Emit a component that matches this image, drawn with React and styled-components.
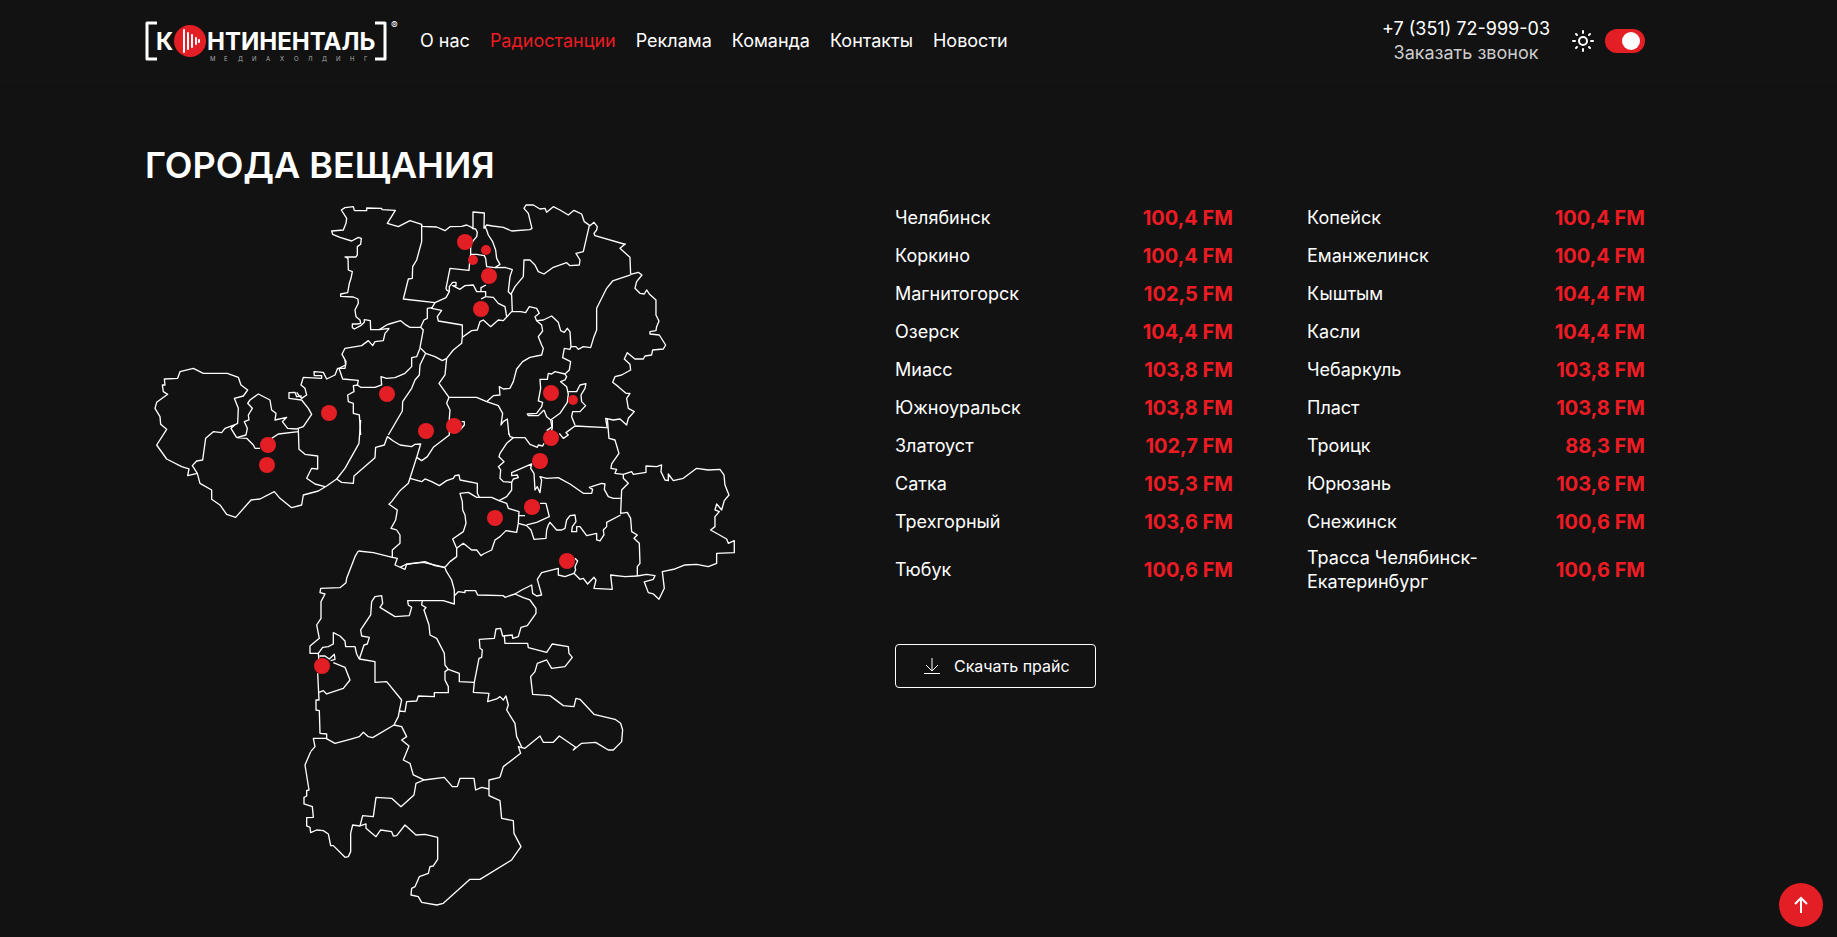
import React, { useState } from 'react';
import styled, { createGlobalStyle } from 'styled-components';

const navItems = ['О нас', 'Радиостанции', 'Реклама', 'Команда', 'Контакты', 'Новости'];

// two stations per table row
const stationRows = [
  [['Челябинск', '100,4 FM'], ['Копейск', '100,4 FM']],
  [['Коркино', '100,4 FM'], ['Еманжелинск', '100,4 FM']],
  [['Магнитогорск', '102,5 FM'], ['Кыштым', '104,4 FM']],
  [['Озерск', '104,4 FM'], ['Касли', '104,4 FM']],
  [['Миасс', '103,8 FM'], ['Чебаркуль', '103,8 FM']],
  [['Южноуральск', '103,8 FM'], ['Пласт', '103,8 FM']],
  [['Златоуст', '102,7 FM'], ['Троицк', '88,3 FM']],
  [['Сатка', '105,3 FM'], ['Юрюзань', '103,6 FM']],
  [['Трехгорный', '103,6 FM'], ['Снежинск', '100,6 FM']],
  [['Тюбук', '100,6 FM'], ['Трасса Челябинск-Екатеринбург', '100,6 FM']],
];

// district borders, each group is drawn at three times the map scale
const borders = [
  {
    id: 'north',
    x: 320,
    y: 195,
    lines: [
      'M103 47L100 35 75 38 64 45 80 70 78 85 70 105 35 108 38 118 60 127 95 138 115 127 124 130 122 148 112 155 112 180 108 186 75 186 84 190 85 225 97 230 93 250 88 265 83 293 62 297 62 304 100 306 114 312 115 325 105 345 108 365 120 375 122 385 112 387 97 387 97 398 103 402 122 392 133 382 133 374 151 377 152 404 178 404 200 390 208 387 242 377 255 388 270 397 302 397',
      'M103 47L140 47 140 39 185 40 186 44 226 46 202 85 235 95 270 77 305 88 305 94 350 96 375 107 390 95 425 94 440 90 455 97 459 101 459 51 493 54 492 100 500 90 518 93 550 97 575 108 630 104 636 100 625 55 612 40 618 30 640 30 660 42 675 40 680 52 700 35 720 45 745 60 762 46 785 57 793 80 810 92 822 82 832 95 830 105 822 115 825 122 912 147 916 147 900 160 930 187 932 238',
      'M459 101L467 102 472 112 470 125 460 137 452 150 452 178 470 178 493 182 497 190 500 215 525 218 540 208 530 190 527 165 518 140 505 120 500 105 495 95',
      'M305 90L305 140 290 195 278 215 277 250 265 252 250 312 345 323 378 308 388 290 380 285 378 280 390 220 447 226 450 190 452 178',
      'M388 290L388 275 398 262 408 262 408 272 398 272 420 283 435 272 460 270 470 290 497 290 497 305 520 307 535 325 555 335 560 365',
      'M483 290L483 278 498 270M483 312L497 305',
      'M345 323L335 340 365 346 352 365 355 378 427 390 427 425 425 445 400 465 380 490 367 497 345 485 317 475 300 458 310 405 302 397 312 375 322 370 322 340 335 338',
      'M427 427L455 407 472 405 480 380 490 375 512 395 535 375 550 377 575 350 602 350 617 353 628 335 650 340 658 355 645 365 650 377 670 375 695 363 715 382 722 407 733 412 742 400 750 410 753 455 768 455 775 463 790 455 812 458 822 425 830 405 830 340 860 280 878 258 932 240',
      'M525 218L555 217 577 224 570 245 565 290 575 300 577 350',
      'M573 298L585 275 610 245 612 195 630 195 645 210 655 230 672 237 700 217 740 203 750 212 778 210 780 195 768 175 790 170 808 92',
      'M932 238L955 232 966 240 950 260 945 280 960 295 973 297 980 285 988 297 1008 315 1008 360 1017 378 1010 395 1008 407 990 410 990 417 1018 420 1037 450 1030 462 998 465 995 480 975 483 970 492 945 492 922 473 913 492 930 508 932 525 905 540 885 545 878 562 895 575 918 595 930 595 920 610 925 640 943 650 925 670 920 690 900 672 880 675 857 670 862 700',
      'M650 377L665 390 668 408 655 425 665 450 670 460 665 480 630 487 608 500 590 522 580 560 570 580 550 582 538 575 540 600 520 602 500 620',
      'M380 490L375 540 357 565 387 607 470 607 500 620 535 632 548 655 543 690 550 680 562 672 567 720',
      'M208 400L195 415 190 437 165 440 158 452 145 437 125 452 75 460 66 478 78 500 75 520 57 520 68 552 115 556 112 570 122 577 165 577 185 570 183 545 200 550 225 548 255 535 275 515 275 488 290 485 300 460M178 404L208 400',
      'M115 570L100 572 102 590 83 600 85 620 100 625 100 655 118 660 122 720',
      'M317 475L300 510 298 540 285 555 275 580 248 620 247 648 205 720',
      'M753 455L750 463 733 460 728 488 752 500 748 525 735 537 740 545 735 555 722 560 740 575 745 597 742 622 730 640 720 655 692 675 680 665 672 645',
      'M735 537L705 530 695 537 685 535 682 553 660 553 662 580 655 618 668 622 665 635 650 655 622 657 625 662 655 662 672 645M692 675L697 700 693 710',
      'M745 590L770 590 780 570 798 566 795 580 783 600 785 620 797 632 780 650 758 650 755 665 765 690',
    ],
  },
  {
    id: 'west',
    x: 145,
    y: 360,
    lines: [
      'M272 193L278 190 280 145 268 115 295 108 308 90 288 75 280 52 247 40 175 40 145 25 105 35 98 55 58 57 60 75 52 75 55 95 68 103 35 127 30 145 45 170 47 193 65 208 35 255 65 297 110 320 132 327 128 347 157 340 142 317 155 303 173 300 182 235 205 215 230 218 240 205 272 193 258 205 275 233',
      'M157 340L165 370 200 390 200 418 225 435 245 463 272 472 318 420 345 417 388 395 405 415 440 443 470 435 475 405 520 393 545 378 575 357 600 325 642 250 647 180',
      'M275 233L305 235 325 255 330 265 345 265M275 233L303 225 307 205 298 185 312 180 310 165 322 145 308 130 315 120 340 102 375 120 380 150 393 160 390 180 425 172 412 185 428 205 455 207 475 200 500 163 490 145 470 120 432 115 432 98 450 97 455 110 470 108',
      'M455 97L463 108 470 115 485 105 480 85 468 75 475 52 530 55 530 47 508 47 507 35 535 37 545 57 570 45 578 25 582 25M600 0L602 15 582 25',
      'M460 207L462 268 480 283 518 288 518 327 500 325 485 355 510 372 540 380M380 235L400 222 460 215',
      'M575 357L590 367 625 370 627 348 665 315 690 293 692 262 718 255 727 230 745 243 765 255M765 392L740 425 732 433 757 450 752 480 738 505 755 510',
    ],
  },
  {
    id: 'center',
    x: 400,
    y: 330,
    lines: [
      'M147 202L140 220 150 240 148 265 148 315 100 352 82 380 65 392 50 382 62 342 45 343 35 350 0 345',
      'M185 275L193 275 193 285 180 300M50 382L30 445 25 460 0 482',
      'M30 445L65 455 75 447 95 455 118 467 140 452 160 445 165 437 177 435 180 450 232 460 232 490 238 502',
      'M238 502L275 502 297 512 320 520 325 535 357 545 355 580 350 607 318 602 300 620 285 630 275 660 250 672 243 677 230 660 215 660 190 640 170 655 158 627 190 605 198 580 195 555 188 540 187 515 180 490 205 487 230 502 238 502',
      'M170 655L170 680 150 695 135 712M0 712L20 702 70 697 135 712',
      'M297 512L320 500 335 480 335 457 310 455 300 445 302 420 295 410 312 395 297 380 300 370 320 340 340 323 375 323 390 343 412 352 415 345 428 348 432 340M327 310L330 320 340 323',
      'M335 457L340 447 355 443 352 435 335 437 335 428 395 402 392 415 402 430 405 480 412 470 420 488 425 450 420 440 440 445 475 443 510 462 550 490 575 490 578 478 568 472 605 460 615 462 613 478 625 500 640 505 662 505',
      'M457 270L457 290 440 302M478 310L490 325 505 315 498 308 525 288 620 293',
      'M622 265L627 325 645 330 657 370 635 402 633 415 650 418 645 430 670 433 670 445 685 460 665 480 662 550 682 547 692 565 695 605 712 615 702 625 718 640 720 700 712 710 712 738',
      'M670 433L695 425 700 433 738 427 738 408 770 410 785 405 783 425 795 450 805 452 805 432 820 452 850 445 890 415 925 420 960 418 972 435 975 465 987 495 973 512 965 540 950 522 945 540 958 545 945 560 945 590 932 600 980 627 985 640 1003 632 1003 668 950 670 950 700 925 710 890 703 855 705 825 717 787 725 793 775 777 808 760 792 745 788 733 756 760 748 765 737 740 733 712 738',
      'M662 555L620 577 620 590 610 600 612 615 600 633 590 630 590 610 560 617 540 590 530 590 530 605 515 605 517 590 528 575 525 555 510 557 500 570 495 595 485 600 470 600 450 577 445 585 440 600 438 625 402 628 393 600 380 587 355 580',
      'M357 557L375 557M420 520L438 520 448 560 410 577 380 585',
    ],
  },
  {
    id: 'south',
    x: 290,
    y: 530,
    lines: [
      'M320 0L330 15 330 40 307 60 307 82M205 63L250 68 307 82 322 85 315 105 345 118 350 103 405 95 435 107 465 113',
      'M205 63L195 80 170 145 168 158 150 173 92 175 90 188 105 192 93 215 93 265 80 285 88 325 60 348 60 370 85 370 98 352 115 350 130 342 130 308 150 318 165 333 167 350 195 350 200 372 208 387',
      'M465 113L468 122 485 150 493 180 493 222 460 212 353 212 355 225 365 232 358 257 315 260 270 232 278 220 275 197 255 200 245 215 242 255 212 300 215 318 238 322 232 342 222 345 208 387 255 395 255 457 290 455 335 510 328 543',
      'M493 197L505 185 525 188 525 182 557 182 563 195 640 197 645 202 675 192 700 203 720 210 738 235 738 250 712 287 693 292 685 320 668 325 667 315 638 318 632 295 618 297 613 325 568 328 570 355 577 360 575 382 567 385 553 457 508 455 508 430 475 418 465 405 463 370 440 325 420 315 417 285 402 240 408 233 395 225 397 212',
      'M553 457L550 487 597 490 593 515 620 507 630 500 640 510 648 498 655 525 650 540 675 580 680 620 697 655',
      'M475 418L465 425 465 450 475 470 475 488 433 488 433 500 385 498 380 513 350 515 345 545 328 543 325 560 312 585 248 623 235 620 220 607 208 620 180 628 135 640 108 625 70 625 75 650 62 665',
      'M85 370L87 395M83 430L87 510 78 510 78 540 88 542 90 610 110 612 110 628',
      'M87 487L100 482 110 492 160 475 180 450 165 412 130 398M88 378L105 378 118 387 133 373 135 388 122 392',
      'M312 585L335 590 350 620 335 630 357 648 340 690 360 700 370 735 402 750',
      'M675 192L695 180 725 165 728 190 740 198 755 195 742 148 755 128 805 115 805 135 825 140 852 130 870 148 880 145 893 162 912 142 918 150 912 175 967 178 962 135 1005 140 1042 138M855 85L863 93 855 110 857 120 852 130',
      'M643 318L645 340 713 340 715 353 770 367 787 342 835 350 837 370 847 382 825 410 785 415 770 390 742 400 735 425 722 440 728 493 780 497 820 527 852 530 858 505 870 508 912 553 975 568 992 580 998 600 995 635 970 660 955 660 917 637 875 640 850 660 857 652 808 618 790 637 760 637 750 618 705 655 685 650 692 670 640 710 630 742',
    ],
  },
  {
    id: 'far-south',
    x: 290,
    y: 700,
    lines: [
      'M630 232L597 240 597 287 630 302 635 355 670 362 672 400 693 440 665 480 570 538 540 538 460 610 440 615 395 607 385 590 363 585 365 565 375 560 388 530 415 520 420 500 430 498 443 478 443 412 405 403 378 405 345 375 320 407 310 408 305 395 272 390 258 410 228 385 228 372 210 378 188 375 182 400 182 455 175 470 165 472 130 437 122 437 115 402 100 392 80 390 62 398 60 382 50 378 50 353 70 352 67 320 42 312 42 292 50 288 50 272 57 270 45 195 62 155',
      'M597 267L575 262 557 270 552 235 510 235 502 260 487 260 463 232 402 240 378 250 372 285 333 320 305 295 258 292 250 350 218 347 210 378',
    ],
  },
];

const pins = [
  [465, 242, 8], [486, 250, 5], [473, 260, 5], [489, 276, 8], [481, 309, 8],
  [387, 394, 8], [329, 413, 8], [426, 431, 8], [454, 426, 8], [551, 393, 8],
  [573, 400, 5], [551, 438, 8], [540, 461, 8], [532, 507, 8], [495, 518, 8],
  [567, 561, 8], [268, 445, 8], [267, 465, 8], [322, 666, 8],
];

const captionLetters = 'МЕДИАХОЛДИНГ'.split('');

function Logo() {
  return (
    <LogoSvg viewBox="0 0 264 42" role="img" aria-label="Континенталь медиахолдинг">
      <path d="M12 3H2V39H12M230 3H240V39H230" fill="none" stroke="#fff" strokeWidth="3" strokeLinejoin="round" />
      <text className="word" x="11" y="30">К</text>
      <circle cx="45" cy="21" r="16" fill="#e31e24" />
      <path d="M39 10V32M43 13V29M47 15V27M51 18V24M54 20V22" stroke="#fff" strokeWidth="2" strokeLinecap="round" />
      <text className="word" x="62" y="30">НТИНЕНТАЛЬ</text>
      {captionLetters.map((letter, i) => (
        <text key={i} className="caption" x={65 + i * 14} y="41">{letter}</text>
      ))}
      <text className="mark" x="246" y="9">®</text>
    </LogoSvg>
  );
}

function BroadcastMap() {
  return (
    <MapSvg viewBox="145 195 600 716" role="img" aria-label="Карта городов вещания">
      {borders.map((group) => (
        <g key={group.id} transform={`translate(${group.x} ${group.y}) scale(0.3333)`}>
          {group.lines.map((line) => (
            <path key={line} d={line} />
          ))}
        </g>
      ))}
      {pins.map(([cx, cy, r]) => (
        <circle key={`${cx}-${cy}`} cx={cx} cy={cy} r={r} />
      ))}
    </MapSvg>
  );
}

function App() {
  const [dark, setDark] = useState(true);

  return (
    <>
      <GlobalStyle />
      <Header>
        <Container>
          <HeaderRow>
            <LogoLink href="#"><Logo /></LogoLink>
            <Nav>
              {navItems.map((item) => (
                <NavLink key={item} href="#" $active={item === 'Радиостанции'}>{item}</NavLink>
              ))}
            </Nav>
            <Contacts>
              <PhoneLink href="tel:+73517299903">+7 (351) 72-999-03</PhoneLink>
              <CallButton type="button">Заказать звонок</CallButton>
            </Contacts>
            <ThemeLabel>
              <svg width="22" height="22" viewBox="0 0 22 22" fill="none" stroke="#fff" strokeWidth="2" strokeLinecap="round">
                <circle cx="11" cy="11" r="4" />
                <path d="M11 1V3M11 19V21M1 11H3M19 11H21M4 4L5 5M17 17L18 18M18 4L17 5M5 17L4 18" />
              </svg>
              <Switch
                type="checkbox"
                role="switch"
                aria-label="Тёмная тема"
                checked={dark}
                onChange={(e) => setDark(e.target.checked)}
              />
            </ThemeLabel>
          </HeaderRow>
        </Container>
      </Header>

      <main>
        <Container>
          <Title>ГОРОДА ВЕЩАНИЯ</Title>
          <Content>
            <BroadcastMap />
            <Side>
              <StationTable>
                <colgroup>
                  <col />
                  <FrequencyCol />
                  <GapCol />
                  <col />
                  <FrequencyCol />
                </colgroup>
                <tbody>
                  {stationRows.map(([left, right]) => (
                    <tr key={left[0]}>
                      <City scope="row">{left[0]}</City>
                      <Frequency>{left[1]}</Frequency>
                      <td />
                      <City scope="row">{right[0]}</City>
                      <Frequency>{right[1]}</Frequency>
                    </tr>
                  ))}
                </tbody>
              </StationTable>
              <DownloadButton type="button">
                <svg width="16" height="18" viewBox="0 0 16 18" fill="none" stroke="#fff">
                  <path d="M8 1V14M2 8L8 14L14 8M0 16.5H16" />
                </svg>
                Скачать прайс
              </DownloadButton>
            </Side>
          </Content>
        </Container>
      </main>

      <TopButton type="button" aria-label="Наверх" onClick={() => window.scrollTo(0, 0)}>
        <svg width="14" height="18" viewBox="0 0 14 18" fill="none" stroke="#fff" strokeWidth="2">
          <path d="M7 17V2M1 8L7 2L13 8" />
        </svg>
      </TopButton>
    </>
  );
}

const GlobalStyle = createGlobalStyle`
  * {
    box-sizing: border-box;
  }

  body {
    margin: 0;
    background: #121212;
    color: #fff;
    font-family: Inter, "Liberation Sans", sans-serif;
    font-size: 18px;
    line-height: 24px;
  }

  button {
    font-family: inherit;
    cursor: pointer;
  }
`;

const Container = styled.div`
  max-width: 1790px;
  padding: 0 145px;
`;

const Header = styled.header`
  border-bottom: 1px solid #0f0f0f;
`;

const HeaderRow = styled.div`
  display: flex;
  align-items: center;
  height: 82px;
  margin-bottom: 4px;
`;

const LogoLink = styled.a`
  display: block;
  flex: none;
`;

const LogoSvg = styled.svg`
  display: block;
  width: 264px;
  height: 42px;
  fill: #fff;

  .word {
    font-size: 24px;
    font-weight: 700;
  }

  .caption {
    fill: #aaa;
    font-size: 6px;
  }

  .mark {
    font-size: 10px;
  }
`;

const Nav = styled.nav`
  display: flex;
  gap: 20px;
  margin-left: 11px;
`;

const NavLink = styled.a`
  color: ${props => props.$active ? '#ed1c24' : '#fff'};
  text-decoration: none;
`;

const Contacts = styled.div`
  display: flex;
  flex-direction: column;
  align-items: center;
  margin-left: auto;
`;

const PhoneLink = styled.a`
  color: #fff;
  text-decoration: none;
`;

const CallButton = styled.button`
  padding: 0;
  border: none;
  background: none;
  color: #ccc;
  font-size: 18px;
  line-height: 24px;
`;

const ThemeLabel = styled.label`
  display: flex;
  align-items: center;
  gap: 11px;
  margin-left: 22px;
`;

const Switch = styled.input`
  appearance: none;
  display: flex;
  align-items: center;
  justify-content: flex-start;
  width: 40px;
  height: 24px;
  margin: 0;
  padding: 0 5px;
  border-radius: 12px;
  background: #555;
  cursor: pointer;

  &::before {
    content: '';
    width: 18px;
    height: 18px;
    border-radius: 50%;
    background: #fff;
  }

  &:checked {
    justify-content: flex-end;
    background: #e31e24;
  }
`;

const Title = styled.h1`
  margin: 58px 0 10px;
  font-size: 36px;
  font-weight: 600;
  line-height: 40px;
`;

const Content = styled.div`
  display: grid;
  grid-template-columns: 1fr 1fr;
`;

const MapSvg = styled.svg`
  display: block;
  width: 80%;

  path {
    fill: none;
    stroke: #fff;
    stroke-width: 4;
    stroke-linejoin: round;
  }

  circle {
    fill: #e31e24;
  }
`;

const Side = styled.div`
  padding-top: 4px;
`;

const StationTable = styled.table`
  width: 100%;
  border-collapse: collapse;
  table-layout: fixed;

  td,
  th {
    padding: 5px 0;
  }
`;

const FrequencyCol = styled.col`
  width: 100px;
`;

const GapCol = styled.col`
  width: 74px;
`;

const City = styled.th`
  font-weight: 400;
  text-align: left;
`;

const Frequency = styled.td`
  color: #ed1c24;
  font-size: 20px;
  font-weight: 700;
  line-height: 28px;
  text-align: right;
  white-space: nowrap;
`;

const DownloadButton = styled.button`
  display: flex;
  align-items: center;
  gap: 14px;
  height: 44px;
  margin-top: 45px;
  padding: 0 25px 0 28px;
  border: 1px solid #fff;
  border-radius: 4px;
  background: none;
  color: #fff;
  font-size: 16px;
`;

const TopButton = styled.button`
  position: fixed;
  right: 14px;
  bottom: 10px;
  display: flex;
  align-items: center;
  justify-content: center;
  width: 44px;
  height: 44px;
  padding: 0;
  border: none;
  border-radius: 50%;
  background: #e31e24;
`;

export default App;
